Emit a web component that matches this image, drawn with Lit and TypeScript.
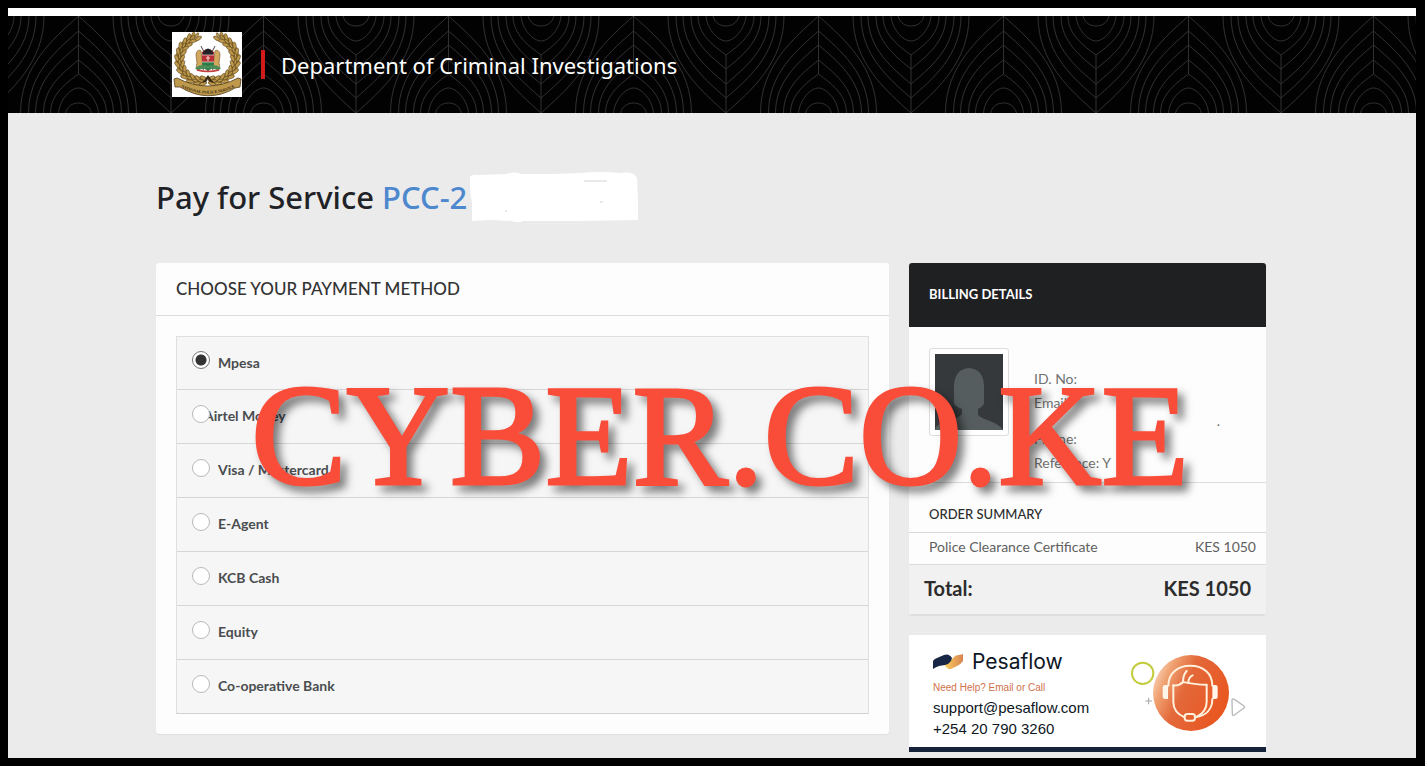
import { LitElement, html, svg, css } from "lit";
import { customElement, state } from "lit/decorators.js";

// One tile of the header's leaf-contour pattern, 185 x 97.
const LEAF_RINGS = [
  { top: 0, half: 58 },
  { top: 15, half: 50 },
  { top: 29, half: 43 },
  { top: 44, half: 35 },
  { top: 58, half: 28 },
];

const leaf = () => svg`
  <path d="M0 0V58"/>
  ${LEAF_RINGS.map(({ top, half }) => {
    const h = 97 - top;
    const d = (s: number) =>
      `M0 ${top}C${s * half * 0.43} ${top + h * 0.23} ${s * half} ${top + h * 0.52} ${s * half} 97`;
    return svg`<path d=${d(-1)}/><path d=${d(1)}/>`;
  })}
  <path d="M-20 97C-19 84 -8 72 0 72S19 84 20 97"/>
  <path d="M-13 97C-11 90 -6 87 0 87S11 90 13 97"/>`;

const headerPattern = html`
  <svg class="pattern" width="100%" height="100%" aria-hidden="true">
    <defs>
      <pattern id="leaves" x="70" width="185" height="97" patternUnits="userSpaceOnUse">
        <g fill="none" stroke="#303030" stroke-width="1">
          ${[0, 185].map((x) => svg`<g transform="translate(${x + 0.5} 0)">${leaf()}</g>`)}
          <g transform="translate(93 97) scale(1 -1)">${leaf()}</g>
        </g>
      </pattern>
    </defs>
    <rect width="100%" height="100%" fill="#020202"/>
    <rect width="100%" height="100%" fill="url(#leaves)"/>
  </svg>`;

// Points along the left branch of the wreath with the branch direction in degrees.
const BRANCH: [number, number, number][] = [
  [24, 5, -60], [19, 7, -45], [15, 11, -50], [11, 15, -60], [9, 20, -75],
  [7.5, 26, -88], [8, 32, -100], [10, 38, -115], [14, 43, -132],
  [19, 47, -150], [25, 49, -165], [31, 49, -175],
];

const branch = () => svg`
  <path d="M21 6C10 11 5 22 8 33C11 44 22 50 34 48" fill="none" stroke="#9c7833" stroke-width="7"/>
  ${BRANCH.map(
    ([x, y, a]) => svg`
      <g transform="translate(${x} ${y}) rotate(${a})" stroke="#4c3a17" stroke-width=".5" fill="#c09a4c">
        <ellipse cx="1" cy="-2.5" rx="3.8" ry="1.7" transform="rotate(-28)"/>
        <ellipse cx="1" cy="2.5" rx="3.8" ry="1.7" transform="rotate(28)"/>
        <ellipse cx="2" cy="0" rx="2.8" ry="1.2"/>
      </g>`,
  )}`;

const emblem = html`
  <svg class="emblem" viewBox="0 0 70 65" role="img" aria-label="National Police Service">
    <rect width="70" height="65" fill="#fff"/>
    ${svg`${branch()}<g transform="translate(71 0) scale(-1 1)">${branch()}</g>`}
    <path d="M29 14L41 38M43 14L31 38" stroke="#5a4636" stroke-width="1"/>
    <path d="M24 23c0-4 3-6 5-4l1 7 1 9-5 3c-2-1-2-4-1-7zM48 23c0-4-3-6-5-4l-1 7-1 9 5 3c2-1 2-4 1-7z" fill="#d1a85d" stroke="#6b4c24" stroke-width=".6"/>
    <path d="M30 20q6-6 12 0v12q-2 5-6 7-4-2-6-7z" fill="#b72f35"/>
    <path d="M31 20q5-7 10 0v3h-10z" fill="#242124"/>
    <path d="M30 30h12v2q-2 5-6 7-4-2-6-7z" fill="#2e7b46"/>
    <path d="M30 23h12M30 30h12" stroke="#fff" stroke-width=".6"/>
    <path d="M34 26h4M36 24v5" stroke="#f4dcdc" stroke-width="1"/>
    <path d="M23 36q6-5 13-2 7-3 13 2l-2 2q-11-3-22 0z" fill="#4a8d58"/>
    <path d="M25 38q11 3 22 0" fill="none" stroke="#c23c3c" stroke-width="1.4"/>
    <path d="M36 43l3 4 3 4-4-1-2-3-2 3-4 1 3-4z" fill="#3b2c18"/>
    <path d="M2 47l3-1q31 16 61 0l3 1-1 8-5 1q-27 16-55-1l-5 0z" fill="#c09a4c" stroke="#4c3a17" stroke-width=".8"/>
    <path id="ribbon" d="M5 53Q36 70 67 53" fill="none"/>
    <text class="ribbon-text"><textPath href="#ribbon" startOffset="50%" text-anchor="middle">NATIONAL POLICE SERVICE</textPath></text>
  </svg>`;

const supportArt = html`
  <svg class="art" viewBox="690 84 354 240" aria-hidden="true">
    <defs>
      <linearGradient id="warm" x1="0" y1=".15" x2="1" y2=".6">
        <stop offset="0" stop-color="#fbe3cf"/><stop offset=".2" stop-color="#f0a272"/>
        <stop offset=".45" stop-color="#e3683a"/><stop offset="1" stop-color="#e9561f"/>
      </linearGradient>
    </defs>
    <circle cx="728" cy="145" r="32" fill="none" stroke="#c3cc3c" stroke-width="6"/>
    <path d="M746 218v20M736 228h20" stroke="#a5a5a5" stroke-width="3"/>
    <path d="M996 226q0-7 7-3l28 19q5 4 0 8l-28 20q-6 4-6-4z" fill="none" stroke="#b9b9b9" stroke-width="4"/>
    <circle cx="873" cy="204" r="114" fill="url(#warm)"/>
    <g fill="none" stroke="#fff0dc" stroke-width="6" stroke-linecap="round" stroke-linejoin="round">
      <path d="M805 182c0-36 26-60 66-60s66 24 66 60"/>
      <path d="M820 181v50c0 24 15 38 34 46M920 181v50c0 20-12 35-29 44"/>
      <path d="M820 181c10 2 22-3 29-10 22 4 46 9 71 8"/>
      <path d="M849 171c0-14 3-25 11-33M865 173c0-10 4-18 13-22"/>
      <path d="M937 222c0 32-20 50-50 54"/>
      <rect x="854" y="267" width="31" height="20" rx="8"/>
    </g>
    <path d="M804 180v42h-9q-7 0-7-7v-28q0-7 7-7zM937 180v42h9q7 0 7-7v-28q0-7-7-7z" fill="#fff5e8"/>
  </svg>`;

const brandMark = html`
  <svg class="mark" viewBox="0 0 30 16" aria-hidden="true">
    <defs>
      <linearGradient id="gold"><stop offset="0" stop-color="#fbd45f"/><stop offset="1" stop-color="#d98250"/></linearGradient>
    </defs>
    <path d="M11 10L17 7L20 4q2-3 6-3l4-1v7q-2 3-6 5l-6 3q-4 1-7-5z" fill="url(#gold)"/>
    <path d="M0 15V7q1-2 4-3l7-3q5-2 8 3l-1 3q-2 3-6 4l-6 1q-3 1-6 3z" fill="#172644"/>
  </svg>`;

const avatar = html`
  <svg class="photo" viewBox="0 0 68 76" role="img" aria-label="Profile photo">
    <rect width="68" height="76" fill="#35393b"/>
    <path d="M19 31Q20 15 34 14 48 15 49 31V49q0 3-6 6v6q3 3 12 6 10 4 13 9H0q0-3 3-5 6-2 13-5 9-3 11-6v-5q-8-3-8-6z" fill="#565d5e"/>
  </svg>`;

const redaction = html`
  <svg class="redaction" viewBox="0 0 168 50" aria-hidden="true">
    <path d="M0 5Q2 2 10 3L36 2Q45-1 52 2L82 2 110 1Q130-1 150 1 164-1 167 6L168 28V48L110 49 53 49Q48 52 42 49L20 48 2 49V30Q-1 18 0 5Z" fill="#fff"/>
    <path d="M114 9h23M130 30h3M35 39h2" stroke="#d4d4d4"/>
  </svg>`;

interface Method {
  id: string;
  name: string;
  tight?: boolean;
}

const METHODS: Method[] = [
  { id: "mpesa", name: "Mpesa" },
  { id: "airtel", name: "Airtel Money", tight: true },
  { id: "card", name: "Visa / Mastercard" },
  { id: "eagent", name: "E-Agent" },
  { id: "kcb", name: "KCB Cash" },
  { id: "equity", name: "Equity" },
  { id: "coop", name: "Co-operative Bank" },
];

@customElement("app-root")
export class AppRoot extends LitElement {
  @state() private selected = "mpesa";

  static styles = css`
    :host { display: block; font-family: Lato, sans-serif; color: #333; }
    * { box-sizing: border-box; margin: 0; }
    .frame { position: relative; border: 8px solid #000; border-right-width: 9px; background: #ebebeb; }
    .strip { height: 8px; background: #fff; }
    .header { display: grid; background: #020202; }
    .header > * { grid-area: 1 / 1; }
    .pattern { display: block; width: 100%; height: 100%; min-height: 0; contain: size; }
    .wrap { width: 100%; max-width: 1110px; margin: 0 auto; }
    .bar { padding-right: 2px; z-index: 1; }
    .brand { display: flex; align-items: center; padding: 16px; }
    .emblem { width: 70px; height: 65px; display: block; }
    .ribbon-text { font: bold 4px "Liberation Serif", serif; fill: #2d210d; }
    .rule { width: 4px; height: 29px; margin: 0 16px 0 19px; background: #d01a1c; }
    .dept { font: 400 22px/32px "Noto Sans", sans-serif; color: #fff; }
    main { padding: 59px 2px 6px 0; }
    .title { display: flex; align-items: center; font: 500 31px/50px "Noto Sans", sans-serif; color: #1f2226; white-space: pre; }
    .code { color: #4d88cf; }
    .redaction { width: 168px; height: 50px; margin-left: 3px; }
    .columns { display: grid; grid-template-columns: minmax(0, 1fr) 357px; gap: 20px; align-items: start; margin-top: 41px; }
    .card { background: #fdfdfd; border-radius: 3px; overflow: hidden; box-shadow: 0 1px 1px #dedede; }
    .card-title { padding: 0 20px; font-size: 17px; font-weight: 500; line-height: 52px; border-bottom: 1px solid #dcdcdc; }
    .methods { margin: 20px; padding: 0; border: 1px solid #dfdfdf; border-bottom-color: #d2d2d2; background: #f6f6f6; }
    .method { display: flex; align-items: center; gap: 8px; height: 54px; padding: 0 15px 2px; border-top: 1px solid #d6d6d6; font-size: 14px; font-weight: 700; color: #4a4d50; }
    .method:first-child { border-top: 0; height: 52px; }
    .method.tight { gap: 0; }
    .method.tight .name { margin-left: -6px; }
    .radio { appearance: none; position: relative; width: 18px; height: 18px; margin: 0 0 4px; border: 1px solid #b9b9b9; border-radius: 50%; background: #fff; }
    .radio:checked { border-color: #777; background: radial-gradient(circle, #333 5px, #fff 6px); }
    .side { display: grid; gap: 20px; }
    .billing-title { background: #1f2022; color: #fff; font-size: 13px; font-weight: 700; line-height: 62px; padding: 0 20px 2px; }
    .person { display: flex; gap: 25px; padding: 21px 20px 7px; border-bottom: 1px solid #dcdcdc; }
    .photo-box { align-self: start; border: 1px solid #dcdcdc; border-radius: 3px; padding: 5px; background: #fff; }
    .photo { display: block; width: 68px; height: 76px; }
    .facts { flex: 1; padding-top: 19px; font-size: 14px; line-height: 24px; color: #707070; }
    .more { line-height: 12px; padding-right: 26px; text-align: right; }
    .summary-title { padding: 14px 20px 0; font-size: 13px; font-weight: 500; line-height: 35px; border-bottom: 1px solid #d8d8d8; color: #2c2c2c; }
    .items { width: 100%; border-collapse: collapse; }
    .items td, .items th { font-weight: 400; text-align: left; font-size: 14px; line-height: 28px; color: #606060; padding: 0 10px 3px 20px; border-bottom: 1px solid #dcdcdc; }
    .items .amount { text-align: right; }
    .items .total > * { font-size: 20px; font-weight: 700; line-height: 46px; padding: 0 15px 3px; background: #f1f1f1; color: #2c2c2c; }
    .banner { display: flex; justify-content: space-between; padding: 18px 18px 0 24px; border-bottom: 5px solid #14233a; background: #fff; height: 117px; font-family: "Liberation Sans", sans-serif; color: #0e1624; }
    .art { width: 118px; height: 80px; }
    .logo { display: flex; align-items: center; gap: 9px; font: 400 21px/17px Inter, sans-serif; }
    .mark { width: 30px; height: 16px; }
    .hint { margin-top: 11px; font-size: 10px; line-height: 14px; color: #d0714c; }
    .contact { display: block; font-size: 15px; line-height: 21px; color: inherit; text-decoration: none; }
    .contact.first { margin-top: 2px; }
    .watermark { position: absolute; inset: 348px 0 auto 16px; text-align: center; font: 400 143px/160px "Liberation Serif", serif; color: #f94d3a; -webkit-text-stroke: 3px #f94d3a; stroke-linejoin: round; filter: drop-shadow(6px 6px 4px rgba(0, 0, 0, 0.5)); white-space: nowrap; pointer-events: none; }
    @media (max-width: 900px) { .columns { grid-template-columns: minmax(0, 1fr); } .watermark { font-size: 10vw; } }
  `;

  private renderMethod(m: Method) {
    return html`
      <label class="method ${m.tight ? "tight" : ""}">
        <input class="radio" type="radio" name="method" .value=${m.id}
          ?checked=${m.id === this.selected} @change=${() => (this.selected = m.id)} />
        <span class="name">${m.name}</span>
      </label>`;
  }

  render() {
    return html`
      <div class="frame">
        <div class="strip"></div>
        <header class="header">
          ${headerPattern}
          <div class="bar">
            <div class="wrap brand">
              ${emblem}
              <span class="rule"></span>
              <span class="dept">Department of Criminal Investigations</span>
            </div>
          </div>
        </header>
        <main>
          <div class="wrap">
            <h1 class="title">Pay for Service <span class="code">PCC-2</span>${redaction}</h1>
            <div class="columns">
              <section class="card">
                <h2 class="card-title">CHOOSE YOUR PAYMENT METHOD</h2>
                <div class="methods" role="radiogroup" aria-label="Payment method">
                  ${METHODS.map((m) => this.renderMethod(m))}
                </div>
              </section>
              <aside class="side">
                <section class="card">
                  <h2 class="billing-title">BILLING DETAILS</h2>
                  <div class="person">
                    <div class="photo-box">${avatar}</div>
                    <div class="facts">
                      <p>ID. No:</p>
                      <p>Email:</p>
                      <p class="more">.</p>
                      <p>Phone:</p>
                      <p>Reference: Y</p>
                    </div>
                  </div>
                  <h3 class="summary-title">ORDER SUMMARY</h3>
                  <table class="items">
                    <tr><td>Police Clearance Certificate</td><td class="amount">KES 1050</td></tr>
                    <tr class="total"><th scope="row">Total:</th><td class="amount">KES 1050</td></tr>
                  </table>
                </section>
                <section class="banner">
                  <div>
                    <div class="logo">${brandMark}<span>Pesaflow</span></div>
                    <p class="hint">Need Help? Email or Call</p>
                    <a class="contact first" href="mailto:support@pesaflow.com">support@pesaflow.com</a>
                    <a class="contact" href="tel:+254207903260">+254 20 790 3260</a>
                  </div>
                  ${supportArt}
                </section>
              </aside>
            </div>
          </div>
        </main>
        <div class="watermark">CYBER.CO.KE</div>
      </div>`;
  }
}
